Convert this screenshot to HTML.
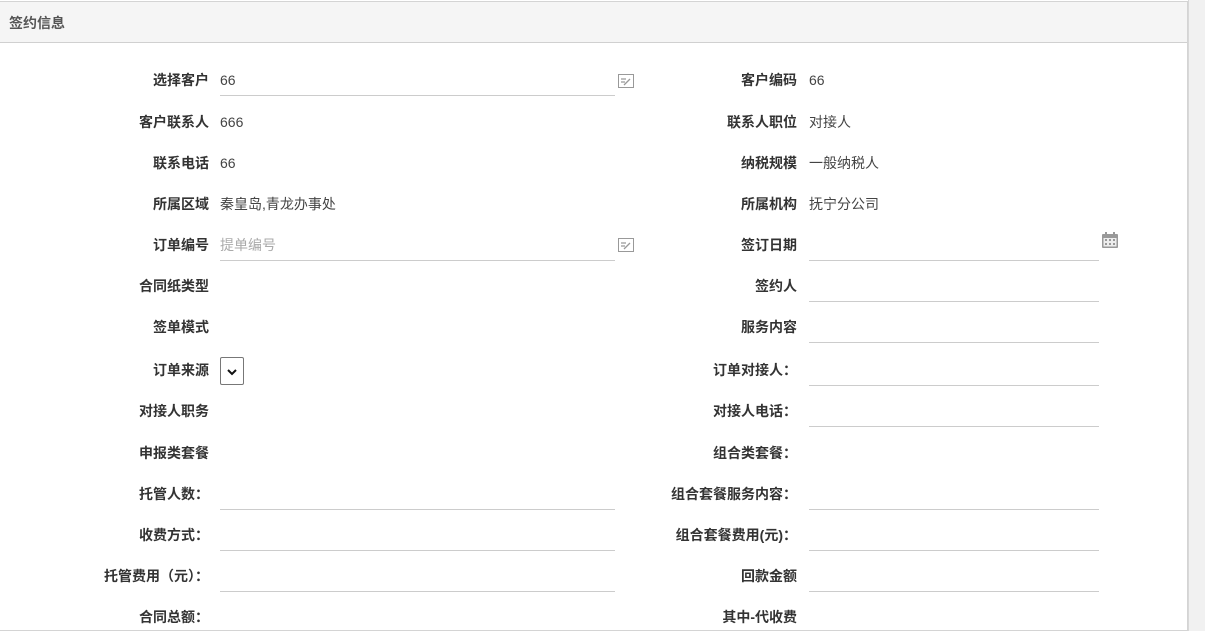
<!DOCTYPE html>
<html><head><meta charset="utf-8"><style>
*{margin:0;padding:0;box-sizing:border-box}
body{width:1205px;height:631px;overflow:hidden;background:#fff;font-family:"Liberation Sans","Noto Sans CJK SC",sans-serif;font-size:14px;position:relative}
.panel{position:absolute;left:0;top:1px;width:1188px;height:630px;border:1px solid #d4d4d4;border-left:none}
.hd{position:absolute;left:0;top:0;width:1187px;height:41px;background:#f5f5f5;border-bottom:1px solid #d0d0d0}
.hd span{position:absolute;left:9px;top:11px;font-weight:bold;color:#555;font-size:14px}
.strip{position:absolute;left:1188px;top:0;width:17px;height:631px;background:#f1f1f1;border-left:1px solid #d8d8d8}
.l{position:absolute;font-weight:bold;color:#333;text-align:right;line-height:18px;white-space:nowrap}
.v{position:absolute;color:#444;line-height:18px}
.u{position:absolute;height:1px;background:#ccc}
</style></head><body>
<div class="panel"><div class="hd"><span>签约信息</span></div></div>
<div class="strip"></div>
<div id="c"></div>
<svg style="position:absolute;left:618px;top:74px" width="16" height="14"><rect x="0.5" y="0.5" width="15" height="13" fill="#fff" stroke="#999"/><path d="M3 5h5M3 8h4M6 11l6-6" stroke="#999" stroke-width="1.3" fill="none"/></svg>
<svg style="position:absolute;left:618px;top:238px" width="16" height="14"><rect x="0.5" y="0.5" width="15" height="13" fill="#fff" stroke="#999"/><path d="M3 5h5M3 8h4M6 11l6-6" stroke="#999" stroke-width="1.3" fill="none"/></svg>
<svg style="position:absolute;left:1102px;top:232px" width="16" height="16"><rect x="0" y="2" width="16" height="14" rx="1" fill="#999"/><rect x="1.5" y="6" width="13" height="8.5" fill="#eee"/><rect x="3" y="0" width="2" height="4" fill="#999"/><rect x="11" y="0" width="2" height="4" fill="#999"/><g fill="#999"><rect x="3" y="7" width="2" height="2"/><rect x="7" y="7" width="2" height="2"/><rect x="11" y="7" width="2" height="2"/><rect x="3" y="11" width="2" height="2"/><rect x="7" y="11" width="2" height="2"/><rect x="11" y="11" width="2" height="2"/></g></svg>
<div style="position:absolute;left:220px;top:357px;width:24px;height:28px;border:1px solid #777;border-radius:2px"><svg width="22" height="26"><path d="M7 12l4 4 4-4" stroke="#111" stroke-width="2" fill="none"/></svg></div>
<script>
var rows=[
[80,"选择客户","66",1,"客户编码","66",0],
[122,"客户联系人","666",0,"联系人职位","对接人",0],
[163,"联系电话","66",0,"纳税规模","一般纳税人",0],
[204,"所属区域","秦皇岛,青龙办事处",0,"所属机构","抚宁分公司",0],
[245,"订单编号","提单编号",2,"签订日期","",1],
[286,"合同纸类型","",0,"签约人","",1],
[327,"签单模式","",0,"服务内容","",1],
[370,"订单来源","",0,"订单对接人：","",1],
[411,"对接人职务","",0,"对接人电话：","",1],
[453,"申报类套餐","",0,"组合类套餐：","",0],
[494,"托管人数：","",1,"组合套餐服务内容：","",1],
[535,"收费方式：","",1,"组合套餐费用(元)：","",1],
[576,"托管费用（元）：","",1,"回款金额","",1],
[617,"合同总额：","",0,"其中-代收费","",0]];
var h="";
rows.forEach(function(r){var y=r[0]-9;
h+='<div class="l" style="right:996px;top:'+y+'px">'+r[1]+'</div>';
if(r[2])h+='<div class="v" style="left:220px;top:'+y+'px;'+(r[3]==2?'color:#aaa':'')+'">'+r[2]+'</div>';
if(r[3])h+='<div class="u" style="left:220px;width:395px;top:'+(r[0]+15)+'px"></div>';
h+='<div class="l" style="right:408px;top:'+y+'px">'+r[4]+'</div>';
if(r[5])h+='<div class="v" style="left:809px;top:'+y+'px">'+r[5]+'</div>';
if(r[6])h+='<div class="u" style="left:809px;width:290px;top:'+(r[0]+15)+'px"></div>';
});
document.getElementById("c").innerHTML=h;
</script>
</body></html>
